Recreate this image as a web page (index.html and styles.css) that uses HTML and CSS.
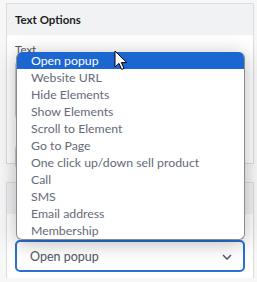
FILE: index.html
```html
<!DOCTYPE html>
<html lang="en">
<head>
<meta charset="UTF-8" />
<meta name="viewport" content="width=device-width, initial-scale=1.0"/>
<title>Text Options</title>
<link rel="stylesheet" href="styles.css">
</head>
<body>
<div class="panel">
  <div class="panel-head">Text Options</div>
  <div class="panel-body first">
    <label class="field-label">Text</label>
    <div class="textarea"></div>
    <div class="spacer"></div>
    <div class="input"></div>
  </div>
</div>
<div class="panel last">
  <div class="panel-head"></div>
  <div class="panel-body">
    <div class="spacer"></div>
    <div class="select">
      <span>Open popup</span>
      <svg class="chevron" width="10" height="6" viewBox="0 0 10 6"><path d="M1 1l4 4 4-4" fill="none" stroke="#50575e" stroke-width="1.5"/></svg>
    </div>
  </div>
</div>

<ul class="dropdown">
  <li class="selected">Open popup</li>
  <li>Website URL</li>
  <li>Hide Elements</li>
  <li>Show Elements</li>
  <li>Scroll to Element</li>
  <li>Go to Page</li>
  <li>One click up/down sell product</li>
  <li>Call</li>
  <li>SMS</li>
  <li>Email address</li>
  <li>Membership</li>
</ul>

<svg class="cursor" width="13" height="21" viewBox="0 0 13 21">
  <path d="M1 1v16l4-3.6 2.6 6 2.4-1-2.6-5.8h5.4z" fill="#fff" stroke="#000" stroke-width="1" stroke-linejoin="round"/>
</svg>
</body>
</html>
```
FILE: styles.css
```css
html {
  overflow: hidden;
}
body {
  font-family: Lato, 'Noto Sans', sans-serif;
  margin: 0;
  padding: 3px 3px 0 6px;
  background-color: #f7f7f7;
  color: #1e1e1e;
  height: 282px;
  box-sizing: border-box;
  overflow: hidden;
}
.panel {
  background: #fff;
  border: 1px solid #dcdcde;
  margin-bottom: 18px;
}
.panel.last {
  margin-bottom: 0;
  border-bottom: none;
}
.panel-head {
  background-color: #f1f2f4;
  height: 31px;
  line-height: 31px;
  padding-left: 8px;
  font-size: 11.5px;
  font-weight: 700;
}
.panel-body {
  padding: 8px;
}
.panel.last .panel-body {
  padding-bottom: 6px;
}
.panel-body.first {
  height: 128px;
  box-sizing: border-box;
}
.field-label {
  display: block;
  font-size: 11.5px;
  color: #50575e;
  line-height: 14px;
  margin-bottom: 4px;
}
.spacer {
  height: 18px;
}
.textarea {
  height: 56px;
  border: 1px solid #ccc;
  border-radius: 4px;
  margin-bottom: 8px;
}
.input {
  height: 22px;
  border: 1px solid #ccc;
  border-radius: 4px;
}
.select {
  height: 28px;
  border: 2px solid #2b6fd6;
  border-radius: 5px;
  display: flex;
  align-items: center;
  justify-content: space-between;
  padding: 0 11px 0 13px;
  font-size: 12.5px;
  color: #50575e;
}
.chevron {
  margin-top: 1px;
}
.dropdown {
  position: absolute;
  left: 16px;
  top: 52px;
  width: 227px;
  margin: 0;
  padding: 0;
  list-style: none;
  background: #fff;
  border: 1px solid #8c8c8c;
  border-top: none;
  border-radius: 6px;
  overflow: hidden;
  box-shadow: 0 3px 20px rgba(0,0,0,0.28);
}
.dropdown li {
  height: 17px;
  line-height: 17px;
  padding-left: 14px;
  font-size: 12.3px;
  color: #646a76;
  white-space: nowrap;
}
.dropdown li.selected {
  background-color: #1b66d1;
  color: #fff;
}
.cursor {
  position: absolute;
  left: 114px;
  top: 50px;
}
```
